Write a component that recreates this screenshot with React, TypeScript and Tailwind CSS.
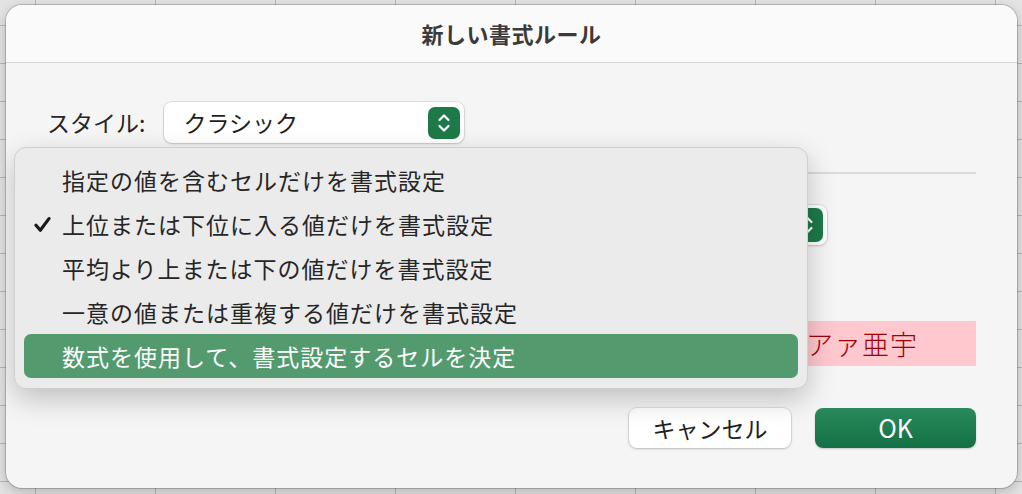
import React from "react";

const menuItems = [
  "指定の値を含むセルだけを書式設定",
  "上位または下位に入る値だけを書式設定",
  "平均より上または下の値だけを書式設定",
  "一意の値または重複する値だけを書式設定",
  "数式を使用して、書式設定するセルを決定",
];

function Stepper({ className = "" }: { className?: string }) {
  return (
    <span
      className={`flex h-[32px] w-[32px] items-center justify-center rounded-[7px] bg-[#1d7a48] ${className}`}
    >
      <svg width="14" height="22" viewBox="0 0 14 22" fill="none">
        <path
          d="M2.5 8 L7 3.5 L11.5 8"
          stroke="white"
          strokeWidth="2.2"
          strokeLinecap="round"
          strokeLinejoin="round"
        />
        <path
          d="M2.5 14 L7 18.5 L11.5 14"
          stroke="white"
          strokeWidth="2.2"
          strokeLinecap="round"
          strokeLinejoin="round"
        />
      </svg>
    </span>
  );
}

function Check() {
  return (
    <svg width="17" height="17" viewBox="0 0 17 17" fill="none">
      <path
        d="M2 9.2 L6.3 14.2 L15 2.6"
        stroke="#1a1a1a"
        strokeWidth="3.2"
        strokeLinecap="round"
        strokeLinejoin="round"
      />
    </svg>
  );
}

export default function App() {
  return (
    <div
      className="relative h-[494px] w-[1022px] overflow-hidden bg-[#e4e4e4] bg-[linear-gradient(to_right,#b8b8b8_1px,transparent_1px),linear-gradient(to_bottom,#b8b8b8_1px,transparent_1px)] bg-[size:120px_38px] bg-[position:35px_25px] pb-[6px] pl-[6px] pr-[5px] pt-[5px]"
      style={{ fontFamily: '"Noto Sans CJK JP", "Noto Sans", sans-serif' }}
    >
      {/* Dialog */}
      <div className="relative flex h-full w-full flex-col overflow-hidden rounded-[16px] bg-[#f5f5f5] shadow-[0_0_0_1px_rgba(0,0,0,0.18),0_4px_14px_rgba(0,0,0,0.22)]">
        {/* Title */}
        <div className="flex h-[58px] items-center justify-center border-b border-[#d6d6d6] bg-[#fafafa]">
          <h1 className="text-[22px] font-bold tracking-[0.5px] text-[#3a3a3a]">新しい書式ルール</h1>
        </div>

        {/* Body */}
        <div className="flex flex-1 flex-col px-[41px] pt-[39px]">
          <div className="flex items-center gap-[19px]">
            <span className="text-[23px] text-[#262626]">スタイル:</span>
            <div className="flex h-[41px] w-[300px] items-center justify-between rounded-[8px] bg-white pl-[19px] pr-[4px] shadow-[0_0_0_1px_rgba(0,0,0,0.08),0_1px_3px_rgba(0,0,0,0.15)]">
              <span className="text-[23px] text-[#1f1f1f]">クラシック</span>
              <Stepper />
            </div>
          </div>

          <div className="mt-[29px] h-[2px] bg-[#dadada]" />

          <div className="mt-[31px] flex items-center">
            <div className="ml-[125px] flex h-[40px] w-[655px] items-center justify-end rounded-[8px] bg-white pr-[4px] shadow-[0_0_0_1px_rgba(0,0,0,0.08),0_1px_3px_rgba(0,0,0,0.15)]">
              <Stepper className="h-[34px] w-[22px]" />
            </div>
          </div>

          <div className="mt-[76px] flex">
            <div className="ml-[125px] flex h-[45px] flex-1 items-center justify-end bg-[#ffc7ce] pr-[58px]">
              <span
                className="text-[27px] leading-none tracking-[1px] text-[#9c0006]"
                style={{ fontFamily: '"Noto Sans CJK JP", serif', fontWeight: 300 }}
              >
                アァ亜宇
              </span>
            </div>
          </div>

          <div className="mt-[42px] flex justify-end gap-[24px]">
            <button className="flex h-[40px] w-[162px] items-center justify-center rounded-[8px] bg-white text-[23px] text-[#1f1f1f] shadow-[0_0_0_1px_rgba(0,0,0,0.08),0_1px_3px_rgba(0,0,0,0.18)]">
              キャンセル
            </button>
            <button className="flex h-[40px] w-[161px] items-center justify-center rounded-[8px] bg-[linear-gradient(to_bottom,#2a8a5c,#137044)] text-[25px] font-normal text-white shadow-[0_1px_2px_rgba(0,0,0,0.2)]">
              OK
            </button>
          </div>
        </div>

        {/* Popup menu */}
        <div className="absolute left-[8px] top-[142px] w-[794px] rounded-[12px] border border-[#cfcfcf] bg-[#ebebeb] py-[10px] shadow-[0_10px_28px_rgba(0,0,0,0.22)]">
          {menuItems.map((item, i) => {
            const selected = i === 4;
            return (
              <div
                key={item}
                className={`mx-[9px] flex h-[44px] items-center rounded-[7px] pl-[38px] text-[23px] tracking-[1px] ${
                  selected ? "bg-[#549a6f] text-white" : "text-[#262626]"
                }`}
              >
                {i === 1 && (
                  <span className="-ml-[28px] mr-[11px] flex w-[17px] items-center">
                    <Check />
                  </span>
                )}
                {item}
              </div>
            );
          })}
        </div>
      </div>
    </div>
  );
}
